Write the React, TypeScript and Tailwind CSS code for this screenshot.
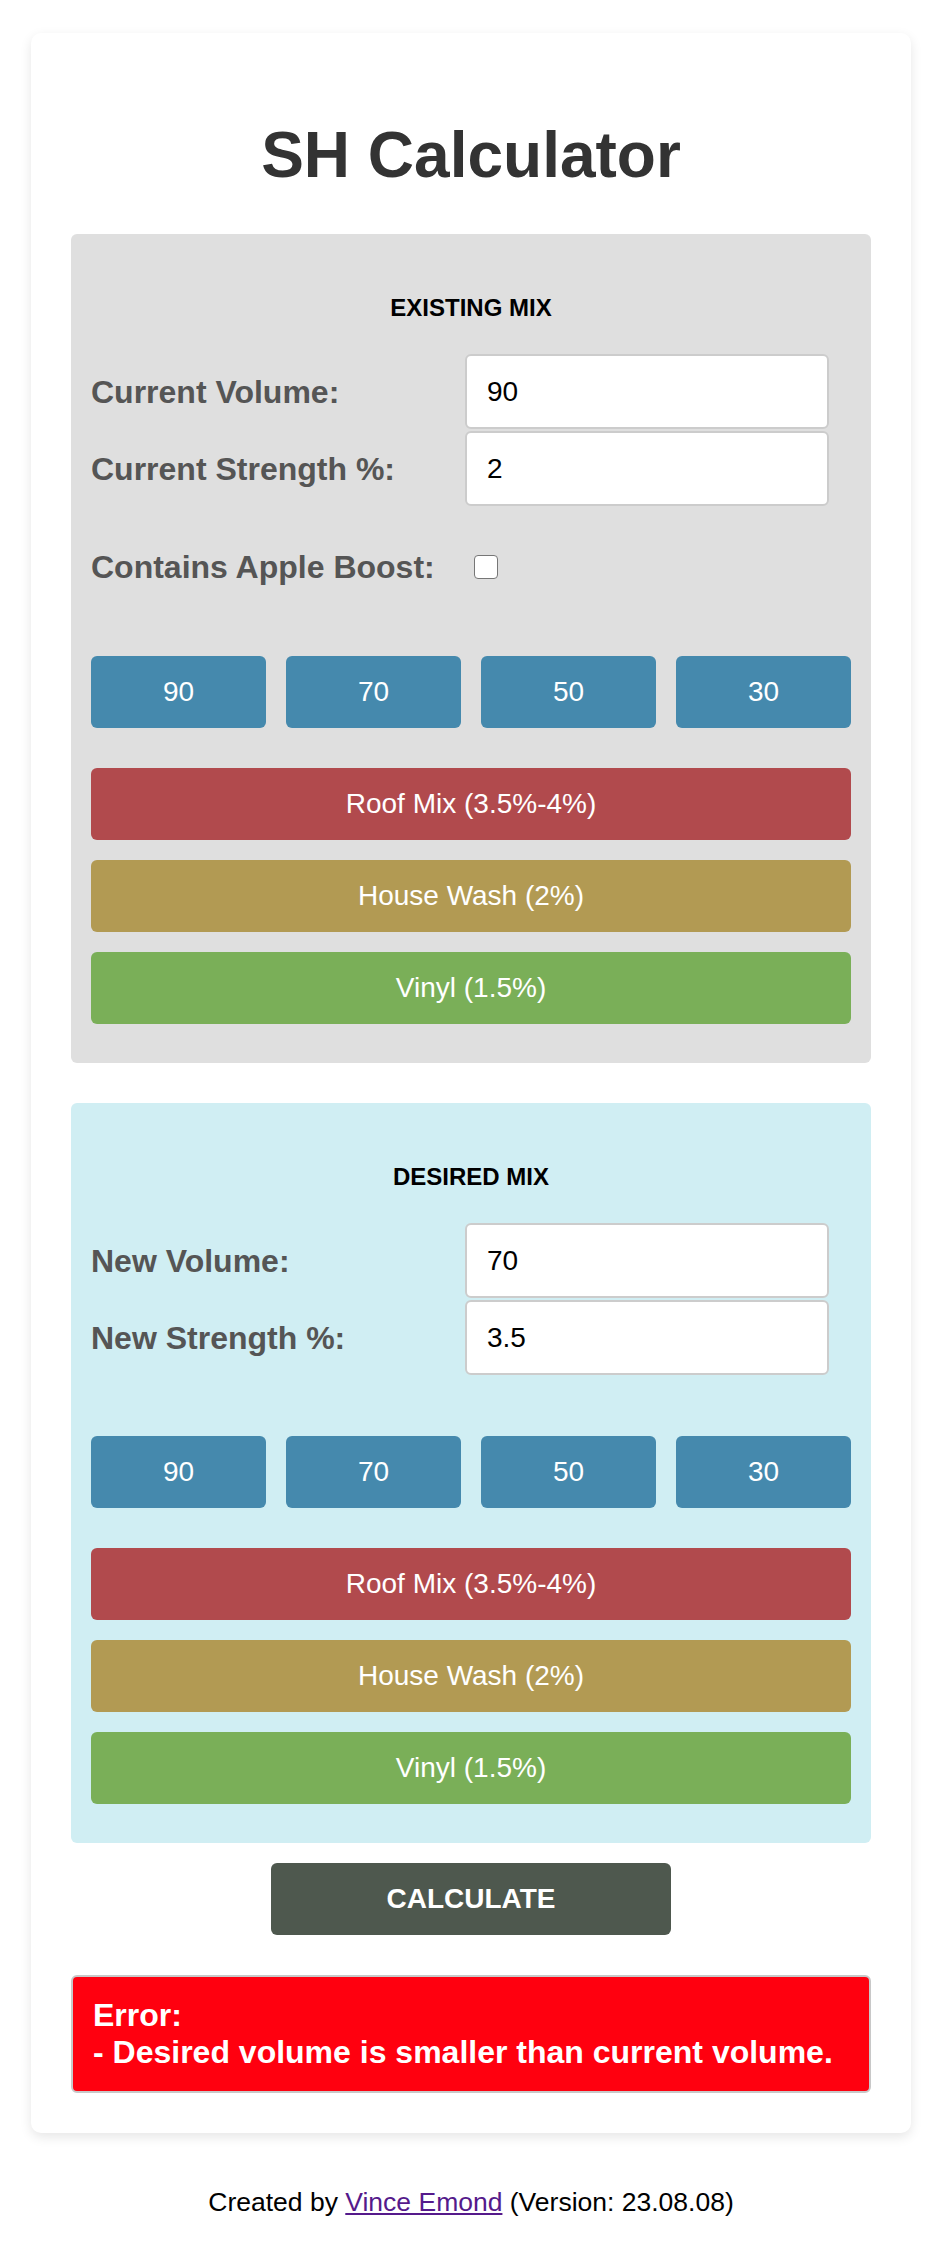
import { useState } from "react";

// SH Calculator: existing mix vs desired mix, preset buttons and an error readout.

const volumes = ["90", "70", "50", "30"];

const presets = [
  { label: "Roof Mix (3.5%-4%)", cls: "bg-[#b14a4d]" },
  { label: "House Wash (2%)", cls: "bg-[#b29a53]" },
  { label: "Vinyl (1.5%)", cls: "bg-[#7aaf58]" },
];

function Field({ label, value, onChange }: { label: string; value: string; onChange: (v: string) => void }) {
  return (
    <div className="flex items-center">
      <label className="w-[374px] shrink-0 text-[32px] leading-none font-bold text-[#555]">{label}</label>
      <input
        type="text"
        value={value}
        onChange={(e) => onChange(e.target.value)}
        className="w-[364px] h-[75px] px-[20px] text-[28px] text-black bg-white border-2 border-[#ccc] rounded-[6px] outline-none"
      />
    </div>
  );
}

function Presets({ onVolume }: { onVolume: (v: string) => void }) {
  return (
    <>
      <div className="grid grid-cols-4 gap-5">
        {volumes.map((v) => (
          <button
            key={v}
            type="button"
            onClick={() => onVolume(v)}
            className="h-[72px] rounded-[6px] bg-[#4589ad] text-white text-[28px]"
          >
            {v}
          </button>
        ))}
      </div>
      <div className="mt-10 flex flex-col gap-5">
        {presets.map((p) => (
          <button key={p.label} type="button" className={`h-[72px] rounded-[6px] text-white text-[28px] ${p.cls}`}>
            {p.label}
          </button>
        ))}
      </div>
    </>
  );
}

export default function App() {
  const [curVol, setCurVol] = useState("90");
  const [curStr, setCurStr] = useState("2");
  const [newVol, setNewVol] = useState("70");
  const [newStr, setNewStr] = useState("3.5");
  const [boost, setBoost] = useState(false);

  return (
    <div className="min-h-[2264px] bg-white pt-[33px] font-['Liberation_Sans',Arial,sans-serif]">
      <div className="ml-[31px] w-[880px]">
        <div className="bg-white rounded-[10px] shadow-[0_4px_12px_rgba(0,0,0,0.1)] px-10 pt-[90px] pb-10">
          <h1 className="text-center text-[64px] leading-none font-bold text-[#333]">SH Calculator</h1>

          <section className="mt-[47px] bg-[#dfdfdf] rounded-[6px] px-5 pt-[62px] pb-[39px]">
            <h3 className="text-center text-[24px] leading-none font-bold text-black">EXISTING MIX</h3>
            <div className="mt-[34px] flex flex-col gap-[2px]">
              <Field label="Current Volume:" value={curVol} onChange={setCurVol} />
              <Field label="Current Strength %:" value={curStr} onChange={setCurStr} />
            </div>
            <div className="mt-[45px] flex items-center h-[32px]">
              <span className="w-[383px] shrink-0 text-[32px] leading-none font-bold text-[#555]">Contains Apple Boost:</span>
              <input
                type="checkbox"
                checked={boost}
                onChange={(e) => setBoost(e.target.checked)}
                className="appearance-none w-[24px] h-[24px] bg-white border border-[#767676] rounded-[4px] checked:bg-[#4589ad]"
              />
            </div>
            <div className="mt-[73px]">
              <Presets onVolume={setCurVol} />
            </div>
          </section>

          <section className="mt-10 bg-[#d0eef3] rounded-[6px] px-5 pt-[62px] pb-[39px]">
            <h3 className="text-center text-[24px] leading-none font-bold text-black">DESIRED MIX</h3>
            <div className="mt-[34px] flex flex-col gap-[2px]">
              <Field label="New Volume:" value={newVol} onChange={setNewVol} />
              <Field label="New Strength %:" value={newStr} onChange={setNewStr} />
            </div>
            <div className="mt-[61px]">
              <Presets onVolume={setNewVol} />
            </div>
          </section>

          <div className="mt-5 flex justify-center">
            <button type="button" className="w-[400px] h-[72px] rounded-[6px] bg-[#4e584e] text-white text-[28px] font-bold">
              CALCULATE
            </button>
          </div>

          <div className="mt-10 border-2 border-[#c8c8c8] rounded-[6px] bg-[#ff000f] px-5 py-5 text-white text-[32px] font-bold leading-[1.15]">
            <div>Error:</div>
            <div>- Desired volume is smaller than current volume.</div>
          </div>
        </div>

        <p className="mt-[56px] text-center text-[26.5px] leading-none text-black">
          Created by{" "}
          <a href="#" className="text-[#551a8b] underline">
            Vince Emond
          </a>{" "}
          (Version: 23.08.08)
        </p>
      </div>
    </div>
  );
}
